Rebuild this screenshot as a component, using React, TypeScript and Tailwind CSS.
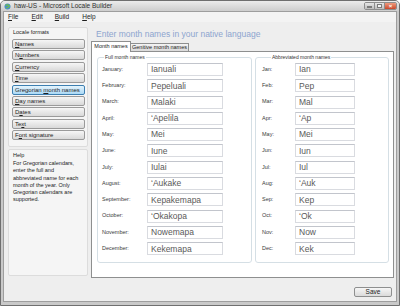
import React from "react";

const full: [string, string][] = [
  ["January:", "Ianuali"],
  ["February:", "Pepeluali"],
  ["March:", "Malaki"],
  ["April:", "\u2018Apelila"],
  ["May:", "Mei"],
  ["June:", "Iune"],
  ["July:", "Iulai"],
  ["August:", "\u2018Aukake"],
  ["September:", "Kepakemapa"],
  ["October:", "\u2018Okakopa"],
  ["November:", "Nowemapa"],
  ["December:", "Kekemapa"],
];

const abbr: [string, string][] = [
  ["Jan:", "Ian"],
  ["Feb:", "Pep"],
  ["Mar:", "Mal"],
  ["Apr:", "\u2018Ap"],
  ["May:", "Mei"],
  ["Jun:", "Iun"],
  ["Jul:", "Iul"],
  ["Aug:", "\u2018Auk"],
  ["Sep:", "Kep"],
  ["Oct:", "\u2018Ok"],
  ["Nov:", "Now"],
  ["Dec:", "Kek"],
];

type Btn = { pre: string; key: string; post: string; selected?: boolean };
const buttons: Btn[] = [
  { pre: "", key: "N", post: "ames" },
  { pre: "N", key: "u", post: "mbers" },
  { pre: "", key: "C", post: "urrency" },
  { pre: "", key: "T", post: "ime" },
  { pre: "Gregorian ", key: "m", post: "onth names", selected: true },
  { pre: "", key: "D", post: "ay names" },
  { pre: "D", key: "a", post: "tes" },
  { pre: "Te", key: "x", post: "t" },
  { pre: "F", key: "o", post: "nt signature" },
];

function Field({ label, value, labelW, inputW }: { label: string; value: string; labelW: string; inputW: string }) {
  return (
    <div className="flex items-center h-[13px]">
      <div className={`${labelW} text-[5.5px] text-[#3a3a3a] leading-none`}>{label}</div>
      <div
        className={`${inputW} h-[13px] flex items-center pl-[3px] bg-white border border-[#d9dbe0] border-t-[#c2c5cc] text-[8.5px] text-[#5a5a5a] leading-none`}
      >
        {value}
      </div>
    </div>
  );
}

export default function App() {
  return (
    <div className="w-[400px] h-[306px] flex flex-col bg-[#c9c9c9] border border-[#6f6f6f] rounded-t-[5px] overflow-hidden font-['Liberation_Sans',Arial,sans-serif] text-[#1e1e1e]">
      {/* Title bar */}
      <div className="h-[10px] flex items-center pl-[2px] pr-[2px] bg-gradient-to-b from-[#ececec] to-[#cdcdcd]">
        <svg width="7" height="7" viewBox="0 0 7 7" className="ml-[1px]">
          <circle cx="3.5" cy="3.5" r="3" fill="#4c8fc7" />
          <path d="M1.5 2.5 Q3.5 1 5.5 3 Q4 5 2 5" fill="none" stroke="#6fbf4a" strokeWidth="1.2" />
        </svg>
        <span className="ml-[3px] text-[6.5px] text-[#2f2f2f] leading-none">haw-US - Microsoft Locale Builder</span>
        <div className="ml-auto flex items-center h-[8px] rounded-[2px] border border-[#8d8d8d] overflow-hidden">
          <div className="w-[10px] h-full bg-gradient-to-b from-[#e6e6e6] to-[#bdbdbd] border-r border-[#8d8d8d] flex items-center justify-center">
            <div className="w-[5px] h-[1.5px] bg-[#f8f8f8] border border-[#7a7a7a] mt-[2px]" />
          </div>
          <div className="w-[10px] h-full bg-gradient-to-b from-[#e6e6e6] to-[#bdbdbd] border-r border-[#8d8d8d] flex items-center justify-center">
            <div className="w-[5px] h-[4px] border border-[#7a7a7a] bg-[#f4f4f4]" />
          </div>
          <div className="w-[11px] h-full bg-gradient-to-b from-[#ee9a7e] to-[#c9472a] flex items-center justify-center text-white text-[6px] font-bold leading-none">
            ×
          </div>
        </div>
      </div>

      {/* Client area */}
      <div className="flex-1 flex flex-col mx-[2px] mb-[3px] border border-[#9d9d9d] bg-[#eeeeee]">
        {/* Menu bar */}
        <div className="h-[10px] flex items-center gap-[12px] pl-[4px] bg-[#f3f3f3] text-[6.5px] leading-none text-[#1e1e1e]">
          <span>
            <u>F</u>ile
          </span>
          <span className="ml-[1px]">
            <u>E</u>dit
          </span>
          <span>
            <u>B</u>uild
          </span>
          <span className="ml-[1px]">
            <u>H</u>elp
          </span>
        </div>

        {/* Body */}
        <div className="flex-1 flex gap-[3px] pl-[4px] pr-[2px] pt-[5px] pb-[1px]">
          {/* Left column */}
          <div className="w-[80px] flex flex-col gap-[2px] pb-[2px]">
            <div className="h-[120px] border border-[#dcdcdc] bg-[#f5f5f5] rounded-[2px] pl-[3px] pr-[2px] pt-[1px]">
              <div className="text-[5.5px] leading-[7px] text-[#222] pl-[1px]">Locale formats</div>
              <div className="flex flex-col gap-[1.4px] mt-[3px]">
                {buttons.map((b, i) => (
                  <div
                    key={i}
                    className={`h-[10px] rounded-[2px] border flex items-center pl-[2px] text-[6px] leading-none text-[#1e1e1e] ${
                      b.selected
                        ? "border-[#3c7fb1] bg-gradient-to-b from-[#e5f4fc] to-[#aad9f6]"
                        : "border-[#9a9a9a] bg-gradient-to-b from-[#f6f6f6] to-[#d9d9d9]"
                    }`}
                  >
                    <span>
                      {b.pre}
                      <u>{b.key}</u>
                      {b.post}
                    </span>
                  </div>
                ))}
              </div>
            </div>
            <div className="flex-1 border border-[#dcdcdc] bg-[#f5f5f5] rounded-[2px] pl-[4px] pt-[2px]">
              <div className="text-[5.5px] leading-[7px] text-[#222]">Help</div>
              <div className="mt-[1px] text-[5.5px] leading-[7.3px] text-[#222] w-[68px]">
                For Gregorian calendars, enter the full and abbreviated name for each month of the year. Only Gregorian calendars are supported.
              </div>
            </div>
          </div>

          {/* Right column */}
          <div className="flex-1 flex flex-col">
            <div className="h-[14px] flex items-center pl-[5px] text-[8.5px] leading-none text-[#8da5cf]">
              Enter month names in your native language
            </div>
            <div className="h-[11px] flex items-end">
              <div className="relative z-10 h-[11px] w-[40px] bg-white border border-b-0 border-[#8e8f8f] flex items-center justify-center text-[5.5px] leading-none text-[#222]">
                Month names
              </div>
              <div className="h-[9px] w-[59px] -ml-px bg-gradient-to-b from-[#f4f4f4] to-[#dadada] border border-[#8e8f8f] flex items-center justify-center text-[5.5px] leading-none text-[#222]">
                Genitive month names
              </div>
            </div>
            <div className="flex-1 -mt-px bg-white border border-[#8e8f8f] flex gap-[3px] pl-[5px] pr-[4px] pt-[2px] items-start">
              <fieldset className="w-[155px] border border-[#d5dfe5] rounded-[3px] pl-[4px] pb-[7px]">
                <legend className="ml-[2px] px-[1px] text-[5px] leading-[6px] text-[#333]">Full month names</legend>
                <div className="flex flex-col gap-[3.3px] pt-[3px]">
                  {full.map(([l, v]) => (
                    <Field key={l} label={l} value={v} labelW="w-[45px]" inputW="w-[76px]" />
                  ))}
                </div>
              </fieldset>
              <fieldset className="flex-1 border border-[#d5dfe5] rounded-[3px] pl-[6px] pb-[7px]">
                <legend className="ml-[9px] px-[1px] text-[5px] leading-[6px] text-[#333]">Abbreviated month names</legend>
                <div className="flex flex-col gap-[3.3px] pt-[3px]">
                  {abbr.map(([l, v]) => (
                    <Field key={l} label={l} value={v} labelW="w-[33px]" inputW="w-[60px]" />
                  ))}
                </div>
              </fieldset>
            </div>
          </div>
        </div>

        {/* Bottom bar */}
        <div className="h-[22px] flex justify-end items-start pt-[8px] pr-[4px]">
          <div className="w-[38px] h-[10px] rounded-[2px] border border-[#8e8f8f] bg-gradient-to-b from-[#f6f6f6] to-[#dadada] flex items-center justify-center text-[6.5px] leading-none text-[#222]">
            Save
          </div>
        </div>
      </div>
    </div>
  );
}
